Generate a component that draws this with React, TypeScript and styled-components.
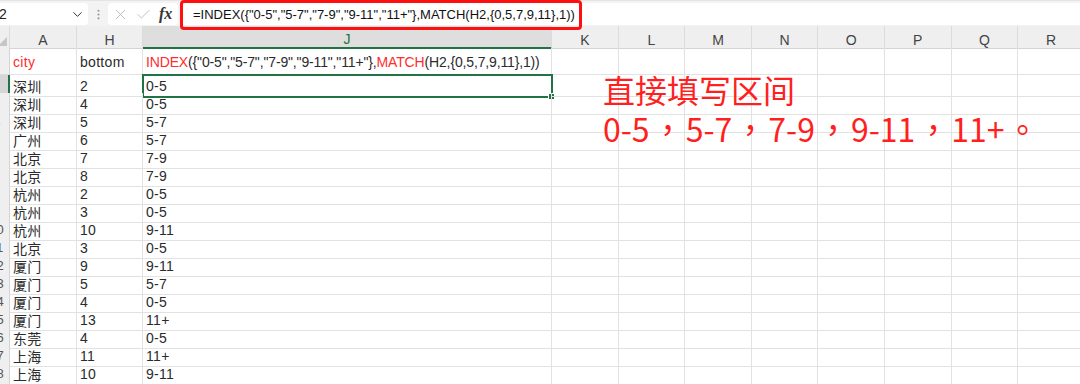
import React from "react";
import styled, { createGlobalStyle, css } from "styled-components";
import { ChevronDown, X, Check, EllipsisVertical } from "lucide-react";

const GlobalStyle = createGlobalStyle`
  body {
    margin: 0;
    background: #ffffff;
    font-family: "Liberation Sans", "Noto Sans CJK SC", sans-serif;
  }
`;

const COLS = "26px 67px 66px 409px repeat(8, 66.6px)";
const GREEN = "#217346";
const RED = "#ff2d2d";

const Page = styled.div`
  position: relative;
  width: 1080px;
  height: 384px;
  overflow: hidden;
  background: #ffffff;
`;

const Toolbar = styled.div`
  display: flex;
  align-items: center;
  height: 26px;
  padding-top: 1px;
  box-sizing: border-box;
  background: #f3f3f3;
  border-top: 1px solid #e4e4e4;
`;

const NameBox = styled.div`
  display: flex;
  align-items: center;
  justify-content: space-between;
  margin-left: -16px;
  width: 104px;
  height: 22px;
  padding: 0 3px 0 8px;
  box-sizing: border-box;
  background: #ffffff;
  border-radius: 4px;
  font-size: 14px;
  color: #222;
`;

const Dots = styled.div`
  display: flex;
  align-items: center;
  width: 20px;
  justify-content: center;
  color: #9a9a9a;
`;

const FxBox = styled.div`
  display: flex;
  align-items: center;
  gap: 6px;
  width: 70px;
  height: 22px;
  padding-left: 4px;
  box-sizing: border-box;
  background: #ffffff;
  border-radius: 4px;
  color: #b5b5b5;
`;

const FxLabel = styled.span`
  font-family: "Liberation Serif", serif;
  font-style: italic;
  font-weight: bold;
  font-size: 16px;
  color: #333;
  margin-left: 1px;
`;

const FormulaInput = styled.div`
  flex: 1;
  height: 22px;
  margin-left: 3px;
  padding-left: 12px;
  display: flex;
  align-items: center;
  background: #ffffff;
  font-size: 13px;
  color: #111;
  white-space: nowrap;
`;

const Callout = styled.div`
  position: absolute;
  left: 180px;
  top: 0;
  width: 402px;
  height: 30px;
  box-sizing: border-box;
  border: 3px solid #ff1010;
  border-radius: 4px;
`;

const Sheet = styled.div`
  display: flex;
  flex-direction: column;
  margin-left: -16px;
`;

const Row = styled.div<{ $h: number }>`
  display: grid;
  grid-template-columns: ${COLS};
  height: ${(p) => p.$h}px;
`;

const HeadCell = styled.div<{ $active?: boolean }>`
  display: flex;
  align-items: center;
  justify-content: center;
  padding-top: 5px;
  box-sizing: border-box;
  background: #efefef;
  border-right: 1px solid #dcdcdc;
  border-bottom: 1px solid #d4d4d4;
  font-size: 14px;
  color: #444;
  ${(p) =>
    p.$active &&
    css`
      background: #dedede;
      color: ${GREEN};
      border-bottom: 2px solid ${GREEN};
    `}
`;

const Corner = styled(HeadCell)`
  align-items: flex-end;
  justify-content: flex-end;
  padding: 0 2px 2px 0;
`;

const RowHead = styled.div<{ $active?: boolean }>`
  display: flex;
  align-items: center;
  justify-content: center;
  background: #efefef;
  border-right: 1px solid #d4d4d4;
  border-bottom: 1px solid #dcdcdc;
  font-size: 13px;
  color: #555;
  ${(p) =>
    p.$active &&
    css`
      background: #d6d6d6;
      border-right: 2px solid ${GREEN};
    `}
`;

const Cell = styled.div<{ $selected?: boolean; $red?: boolean; $tight?: boolean }>`
  position: relative;
  display: flex;
  align-items: center;
  padding-left: 3px;
  padding-top: 1px;
  box-sizing: border-box;
  border-right: 1px solid #e2e2e2;
  border-bottom: 1px solid #e2e2e2;
  font-size: 14px;
  color: ${(p) => (p.$red ? RED : "#2b2b2b")};
  white-space: nowrap;
  letter-spacing: ${(p) => (p.$tight ? "-0.15px" : "0.3px")};
  ${(p) =>
    p.$selected &&
    css`
      outline: 2px solid ${GREEN};
      outline-offset: -1px;
      &::after {
        content: "";
        position: absolute;
        right: -4px;
        bottom: -4px;
        width: 5px;
        height: 5px;
        background: ${GREEN};
        border: 1px solid #fff;
      }
    `}
`;

const Fn = styled.span`
  color: ${RED};
`;

const Note = styled.div`
  position: absolute;
  left: 603px;
  top: 70px;
  color: #ff1f1f;
  font-family: "Noto Sans CJK SC", sans-serif;
  font-size: 32px;
  line-height: 39px;
`;

const Punct = styled.span`
  font-family: "Noto Sans CJK TC", sans-serif;
  margin: 0 2px;
`;

const letters = ["A", "H", "J", "K", "L", "M", "N", "O", "P", "Q", "R"];

const data: [string, string, string][] = [
  ["深圳", "2", "0-5"],
  ["深圳", "4", "0-5"],
  ["深圳", "5", "5-7"],
  ["广州", "6", "5-7"],
  ["北京", "7", "7-9"],
  ["北京", "8", "7-9"],
  ["杭州", "2", "0-5"],
  ["杭州", "3", "0-5"],
  ["杭州", "10", "9-11"],
  ["北京", "3", "0-5"],
  ["厦门", "9", "9-11"],
  ["厦门", "5", "5-7"],
  ["厦门", "4", "0-5"],
  ["厦门", "13", "11+"],
  ["东莞", "4", "0-5"],
  ["上海", "11", "11+"],
  ["上海", "10", "9-11"],
  ["", "", ""],
];

const blanks = Array.from({ length: 8 });

export default function App() {
  return (
    <Page>
      <GlobalStyle />
      <Toolbar>
        <NameBox>
          <span>J2</span>
          <ChevronDown size={15} strokeWidth={1.6} color="#333" />
        </NameBox>
        <Dots>
          <EllipsisVertical size={13} strokeWidth={2} />
        </Dots>
        <FxBox>
          <X size={17} strokeWidth={1.2} />
          <Check size={17} strokeWidth={1.2} />
          <FxLabel>fx</FxLabel>
        </FxBox>
        <FormulaInput>
          =INDEX({"{"}"0-5","5-7","7-9","9-11","11+"{"}"},MATCH(H2,{"{"}0,5,7,9,11{"}"},1))
        </FormulaInput>
      </Toolbar>
      <Callout />

      <Sheet>
        <Row $h={22}>
          <Corner>
            <svg width="9" height="9" viewBox="0 0 9 9">
              <polygon points="9,0 9,9 0,9" fill="#c6c6c6" />
            </svg>
          </Corner>
          {letters.map((l) => (
            <HeadCell key={l} $active={l === "J"}>
              {l}
            </HeadCell>
          ))}
        </Row>

        <Row $h={27}>
          <RowHead>1</RowHead>
          <Cell $red>city</Cell>
          <Cell>bottom</Cell>
          <Cell $tight>
            <Fn>INDEX</Fn>({"{"}"0-5","5-7","7-9","9-11","11+"{"}"},<Fn>MATCH</Fn>(H2,{"{"}0,5,7,9,11{"}"},1))
          </Cell>
          {blanks.map((_, i) => (
            <Cell key={i} />
          ))}
        </Row>

        {data.map(([city, bottom, range], r) => (
          <Row $h={18} key={r}>
            <RowHead $active={r === 0}>{r + 2}</RowHead>
            <Cell>{city}</Cell>
            <Cell>{bottom}</Cell>
            <Cell $selected={r === 0}>{range}</Cell>
            {blanks.map((_, i) => (
              <Cell key={i} />
            ))}
          </Row>
        ))}
      </Sheet>

      <Note>
        <div>直接填写区间</div>
        <div>
          0-5<Punct>，</Punct>5-7<Punct>，</Punct>7-9<Punct>，</Punct>9-11
          <Punct>，</Punct>11+<Punct>。</Punct>
        </div>
      </Note>
    </Page>
  );
}
